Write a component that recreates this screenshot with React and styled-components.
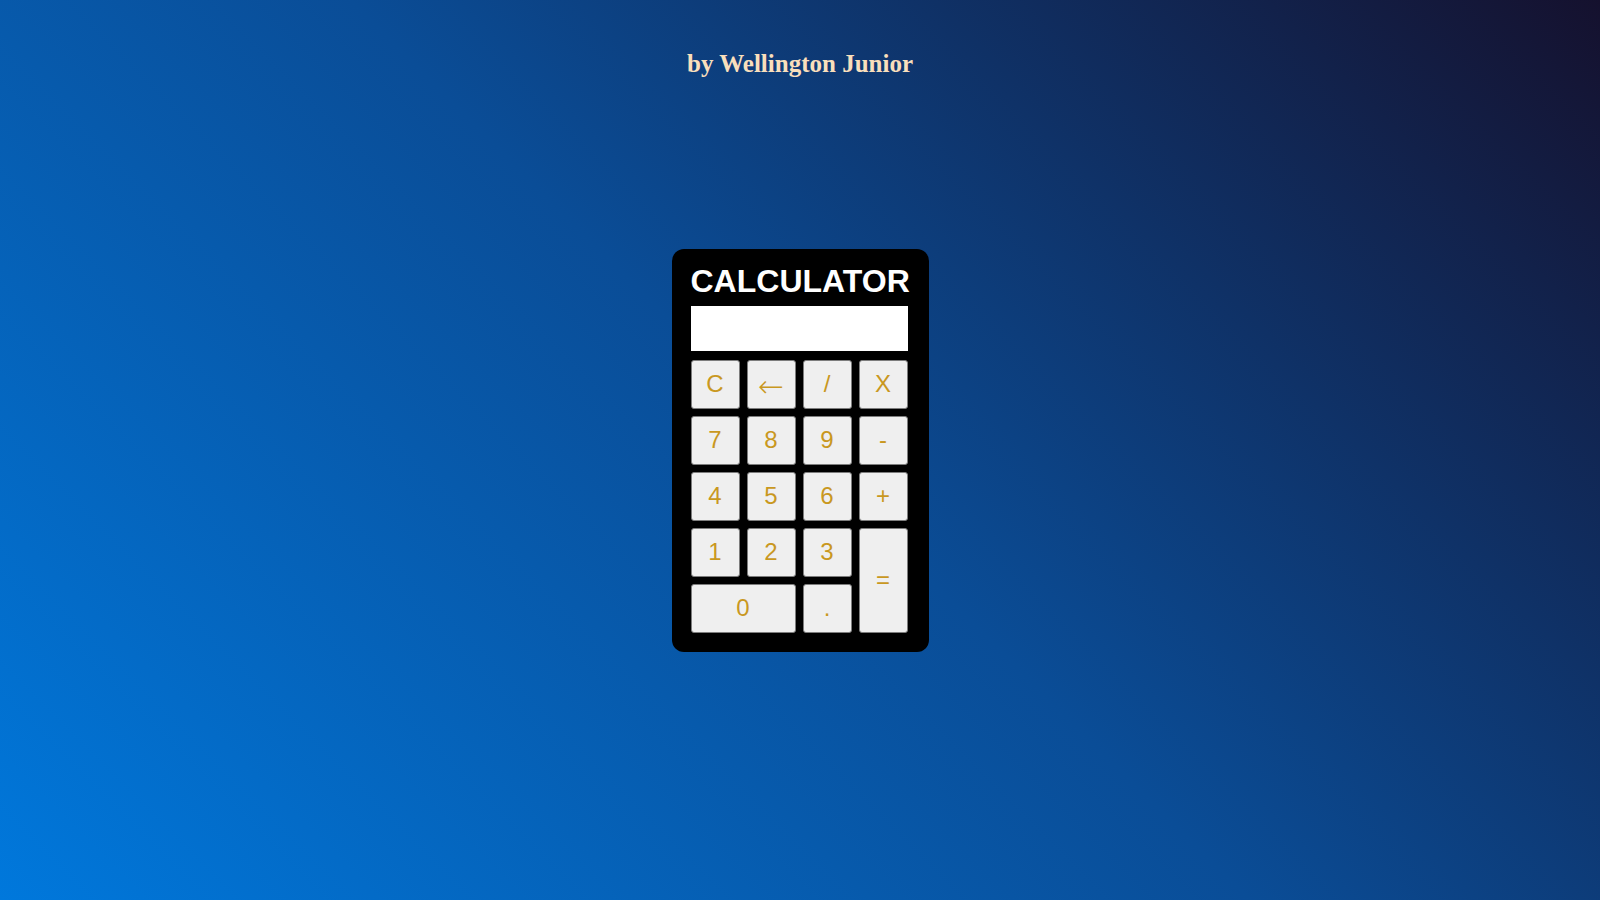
import React from 'react';
import styled, { createGlobalStyle } from 'styled-components';

const GlobalStyle = createGlobalStyle`
    html, body {
      margin: 0;
      padding: 0;
    }

    body {
      min-height: 100vh;
      background: linear-gradient(45deg, #0078dc 0%, #0a4d97 50%, #15112e 100%);
      background-attachment: fixed;
    }
`;

const Page = styled.div`
    min-height: 100vh;
    display: grid;
    grid-template-rows: 1fr auto 1fr;
    justify-items: center;
`;

const Credit = styled.h2`
    align-self: start;
    margin: 0;
    padding-top: 51px;
    font-family: "Liberation Serif", "DejaVu Serif", serif;
    font-size: 25px;
    font-weight: bold;
    line-height: 1;
    color: #f9dfbc;
`;

const Calculator = styled.div`
    width: 217px;
    padding: 17px 21px 19px 19px;
    background: #000;
    border-radius: 12px;
    display: flex;
    flex-direction: column;
`;

const Title = styled.h1`
    margin: 0;
    font-family: "Liberation Sans", Arial, sans-serif;
    font-size: 32px;
    font-weight: bold;
    line-height: 31px;
    color: #fff;
    text-align: center;
    white-space: nowrap;
`;

const Display = styled.input`
    box-sizing: border-box;
    width: 100%;
    height: 45px;
    margin: 9px 0;
    border: none;
    background: #fff;
    padding: 0 8px;
    font-family: "Liberation Sans", Arial, sans-serif;
    font-size: 24px;
    text-align: right;
    outline: none;
`;

const Keys = styled.div`
    display: grid;
    grid-template-columns: repeat(4, 49px);
    grid-auto-rows: 49px;
    gap: 7px;
`;

const Key = styled.button`
    box-sizing: border-box;
    grid-column: span ${props => props.$wide ? 2 : 1};
    grid-row: span ${props => props.$tall ? 2 : 1};
    margin: 0;
    padding: ${props => props.$symbol ? '4px 0 0' : '0'};
    background: #efefef;
    border: 1px solid #7d7d7d;
    border-radius: 3px;
    font-family: ${props => props.$symbol ? '"DejaVu Sans", sans-serif' : '"Liberation Sans", Arial, sans-serif'};
    font-size: ${props => props.$symbol ? '31px' : '24px'};
    font-weight: ${props => props.$symbol ? 200 : 400};
    line-height: 1;
    color: #c9981f;
    cursor: pointer;
`;

const keys = [
  { label: 'C' },
  { label: '←', symbol: true },
  { label: '/' },
  { label: 'X' },
  { label: '7' },
  { label: '8' },
  { label: '9' },
  { label: '-' },
  { label: '4' },
  { label: '5' },
  { label: '6' },
  { label: '+' },
  { label: '1' },
  { label: '2' },
  { label: '3' },
  { label: '=', tall: true },
  { label: '0', wide: true },
  { label: '.' },
];

const App = () => (
  <>
    <GlobalStyle />
    <Page>
      <Credit>by Wellington Junior</Credit>
      <Calculator>
        <Title>CALCULATOR</Title>
        <Display type="text" readOnly />
        <Keys>
          {keys.map((key) => (
            <Key
              key={key.label}
              $wide={key.wide}
              $tall={key.tall}
              $symbol={key.symbol}
            >
              {key.label}
            </Key>
          ))}
        </Keys>
      </Calculator>
      <div />
    </Page>
  </>
);

export default App;
